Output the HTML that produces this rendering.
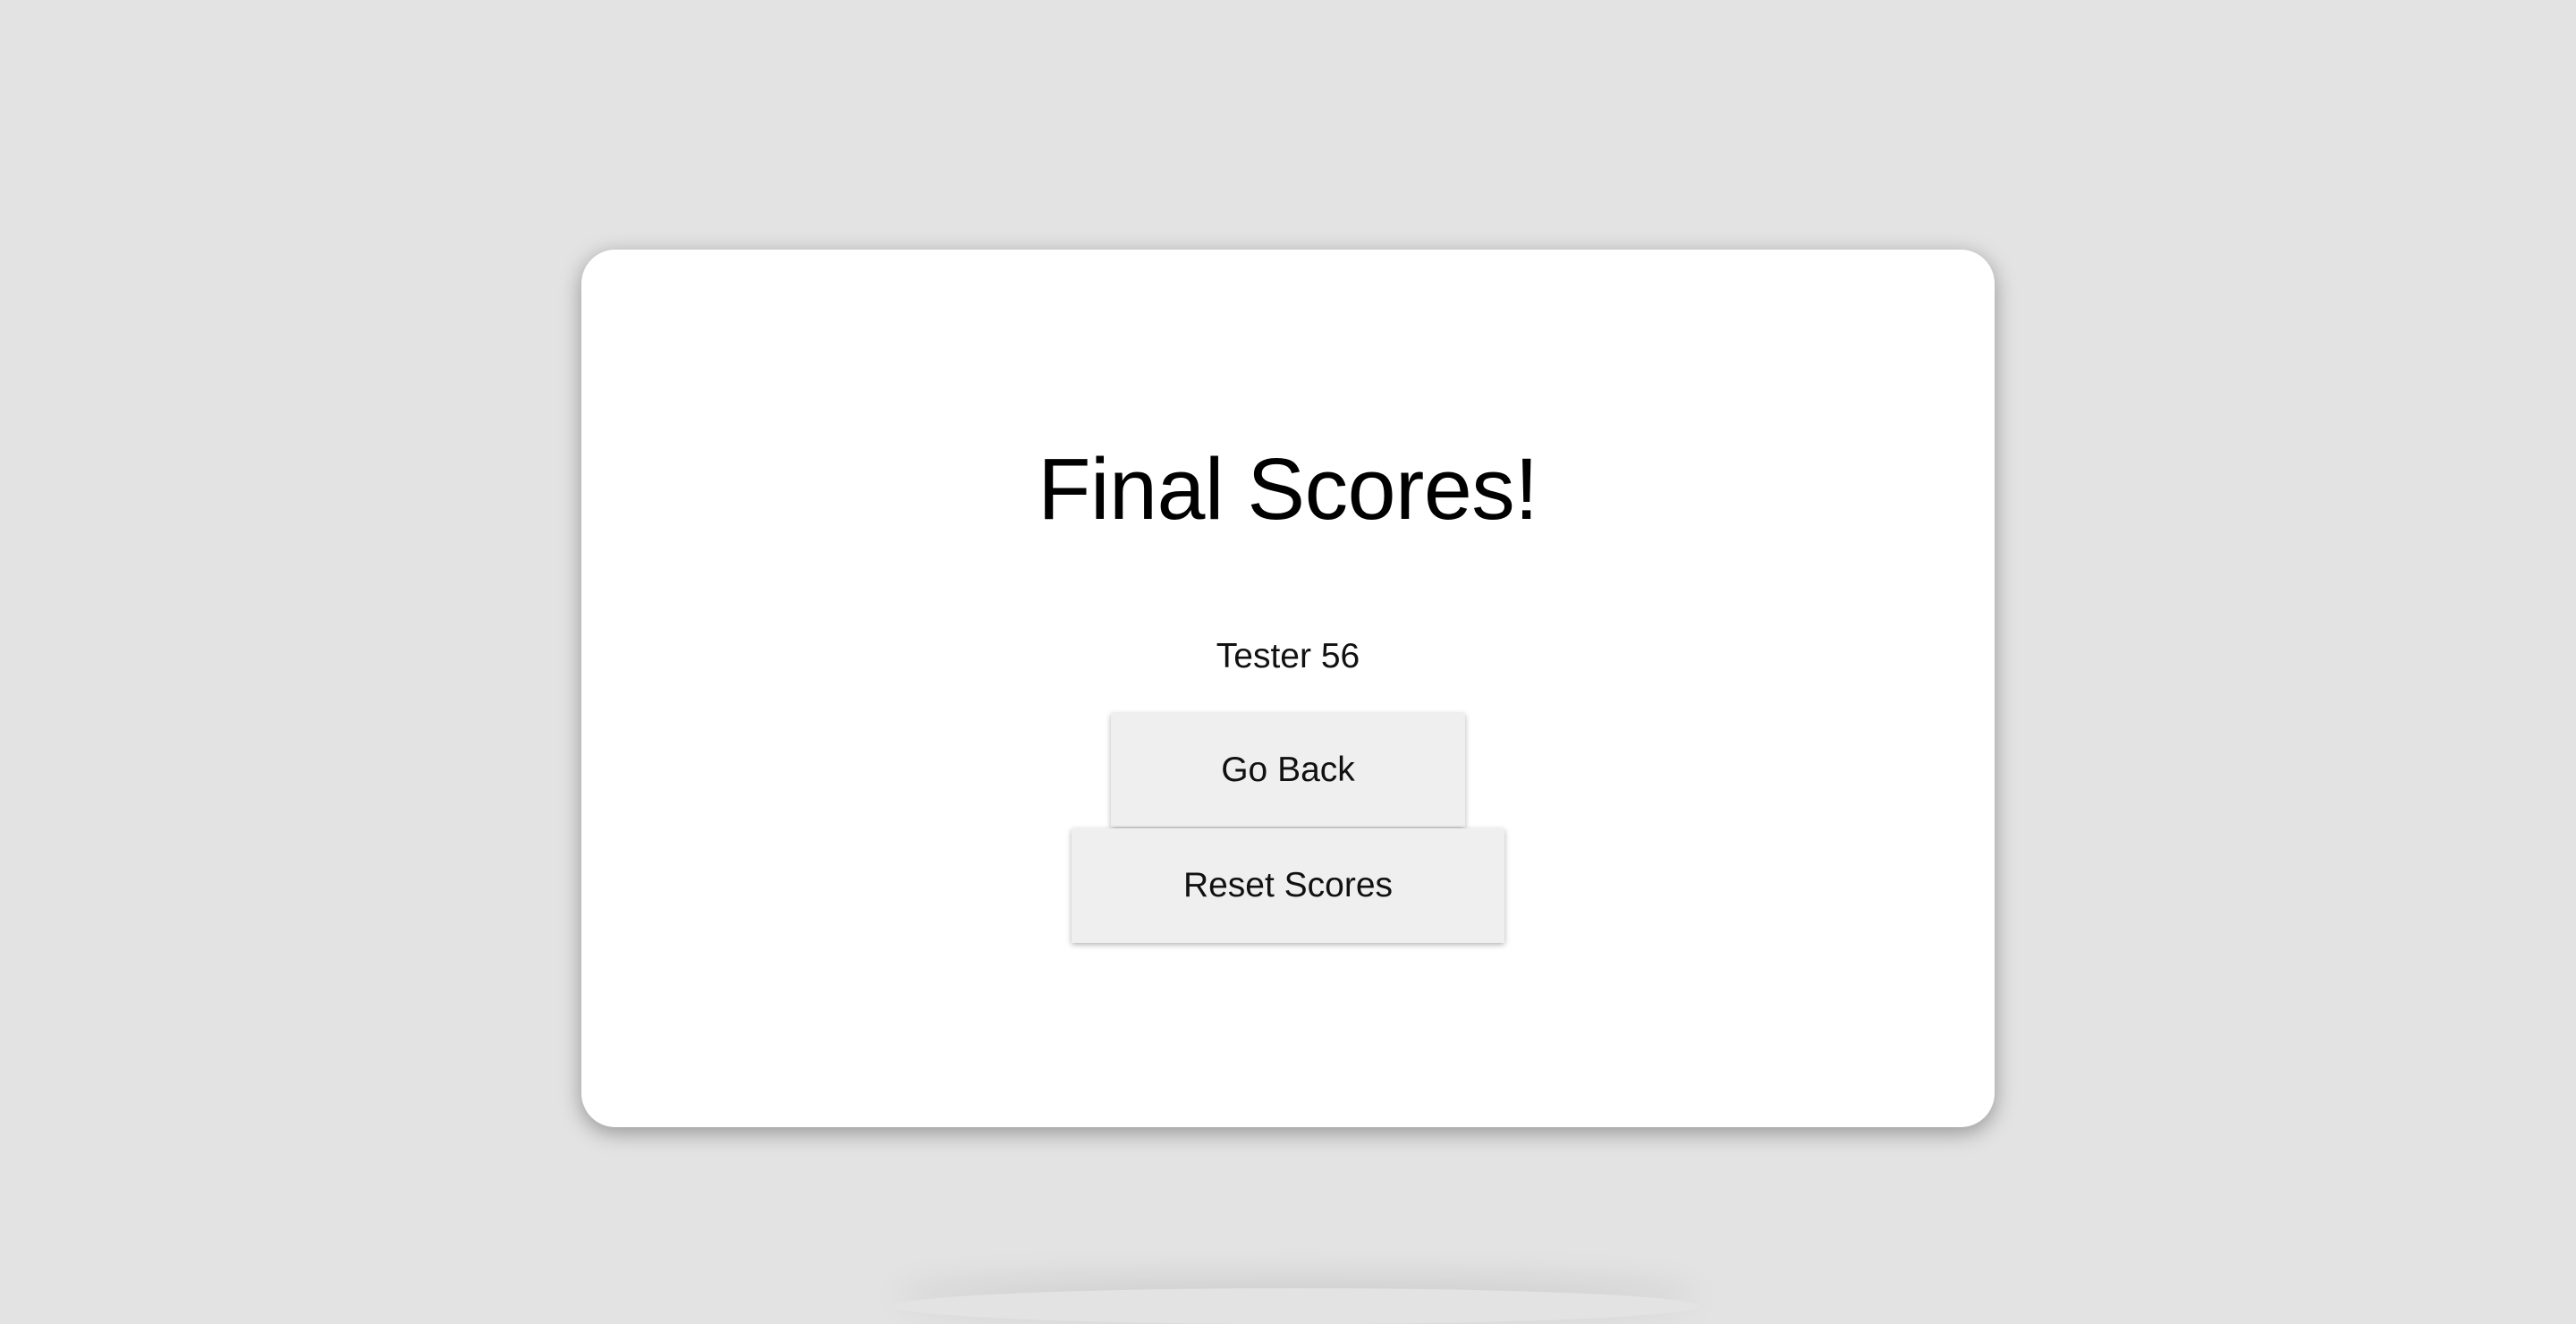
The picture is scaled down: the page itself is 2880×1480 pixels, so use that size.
<!DOCTYPE html>
<html><head><meta charset="utf-8"><style>
html,body{margin:0;padding:0;width:2880px;height:1422px;background:#e3e3e3;overflow:hidden;font-family:"Liberation Sans",sans-serif;}
.card{position:absolute;left:650px;top:279px;width:1580px;height:981px;background:#fff;border-radius:38px;box-shadow:0 6px 24px rgba(0,0,0,0.35);}
h1{position:absolute;left:0;right:0;top:488px;margin:0;text-align:center;font-weight:normal;font-size:97px;line-height:117px;color:#000;letter-spacing:-0.5px;}
.t{position:absolute;left:0;right:0;top:708px;text-align:center;font-size:39px;line-height:52px;color:#111;}
.b{position:absolute;background:#efefef;box-shadow:0 2px 6px rgba(0,0,0,0.3);text-align:center;font-size:39px;color:#111;}
.blob{position:absolute;left:1000px;top:1440px;width:900px;height:40px;border-radius:50%;box-shadow:0 -10px 40px rgba(0,0,0,0.1);}
</style></head><body>
<div class="blob"></div>
<div class="card"></div>
<h1>Final Scores!</h1>
<div class="t">Tester 56</div>
<div class="b" style="left:1242px;top:797px;width:396px;height:127px;line-height:127px;">Go Back</div>
<div class="b" style="left:1198px;top:926px;width:484px;height:128px;line-height:128px;">Reset Scores</div>
</body></html>
